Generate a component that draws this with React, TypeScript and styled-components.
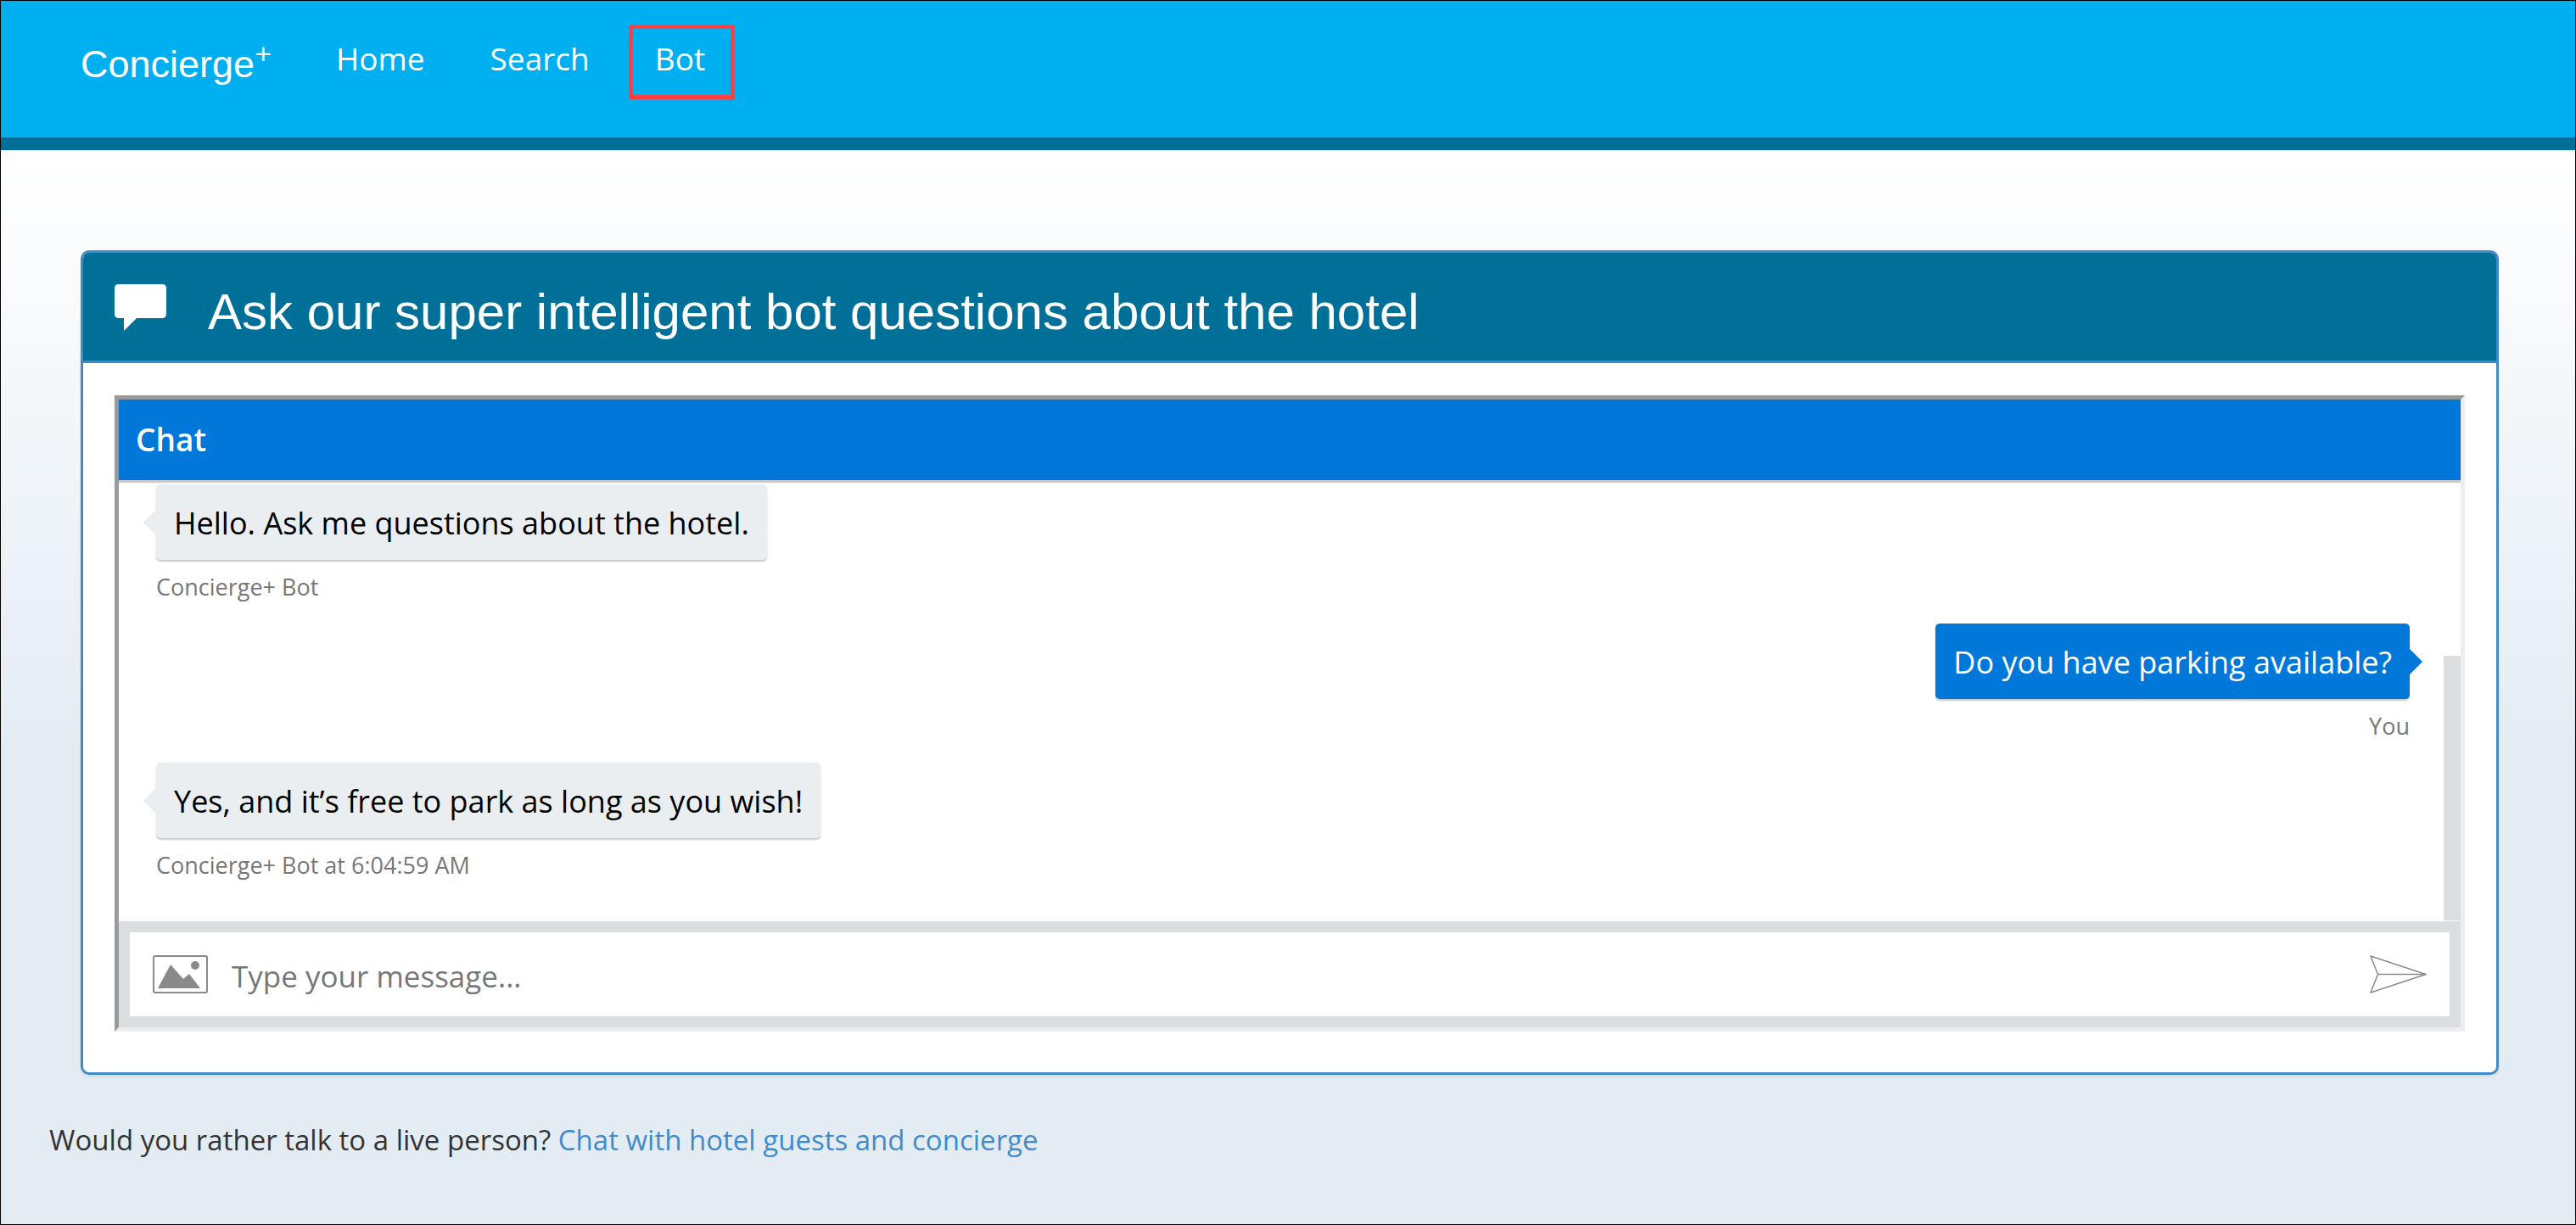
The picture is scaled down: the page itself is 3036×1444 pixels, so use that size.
import React from "react";
import styled, { createGlobalStyle } from "styled-components";

const ui = `"Segoe UI", "Open Sans", "Noto Sans", sans-serif`;
const arial = `Arial, "Liberation Sans", sans-serif`;

const GlobalStyle = createGlobalStyle`
  *, *::before, *::after { box-sizing: border-box; }
  body { margin: 0; }
`;

const Page = styled.div`
  min-height: 100vh;
  border: 1px solid #000;
  background: linear-gradient(to bottom, #ffffff 180px, #e4ecf3 880px);
  font-family: ${ui};
  color: #333;
`;

const Header = styled.header`
  display: flex;
  align-items: flex-start;
  height: 176px;
  padding: 28px 94px 0;
  background: #00aff0;
  border-bottom: 15px solid #007099;
`;

const Brand = styled.a`
  margin-right: 45px;
  padding-top: 22px;
  font: 45px/50px ${arial};
  color: #fff;
  text-decoration: none;

  sup {
    font-size: 34px;
    line-height: 0;
  }
`;

const Nav = styled.nav`
  display: flex;
  gap: 11px;
`;

const NavLink = styled.a<{ $marked?: boolean }>`
  height: 88px;
  padding: 11px 30px 14px 26px;
  border: 5px solid ${(p) => (p.$marked ? "#ff4040" : "transparent")};
  font-size: 37px;
  line-height: 48px;
  color: #fff;
  text-decoration: none;
`;

const Panel = styled.section`
  margin: 118px 90px 0 94px;
  border: 3px solid #428bca;
  border-radius: 10px;
  background: #fff;
  box-shadow: 0 2px 3px rgba(0, 0, 0, 0.08);
  overflow: hidden;
`;

const PanelHeading = styled.header`
  display: flex;
  align-items: center;
  gap: 49px;
  height: 130px;
  padding: 2px 37px 0;
  background: #007099;
  border-bottom: 3px solid #428bca;
  color: #fff;

  svg {
    width: 61px;
    height: 56px;
    flex: none;
  }

  h1 {
    margin: 0;
    padding-top: 10px;
    font: 60px/66px ${arial};
  }
`;

const PanelBody = styled.div`
  padding: 38px 37px 48px;
`;

const ChatFrame = styled.div`
  border: 5px solid;
  border-color: #9a9a9a #eee #eee #9a9a9a;
`;

const ChatTitle = styled.h2`
  position: relative;
  margin: 0;
  padding: 23px 20px 24px;
  background: #0078d9;
  box-shadow: 0 3px 1px rgba(0, 0, 0, 0.2);
  font-size: 37px;
  font-weight: 600;
  line-height: 48px;
  color: #fff;
`;

const Log = styled.div`
  display: flex;
  justify-content: space-between;
  height: 520px;
`;

const Messages = styled.div`
  display: flex;
  flex: 1;
  flex-direction: column;
  gap: 27px;
  padding: 5px 40px 0 44px;
`;

const ScrollThumb = styled.div`
  align-self: flex-end;
  width: 20px;
  height: 312px;
  margin-bottom: 1px;
  background: #dadee1;
`;

const Message = styled.div<{ $mine?: boolean }>`
  display: flex;
  flex-direction: column;
  align-items: ${(p) => (p.$mine ? "flex-end" : "flex-start")};
`;

const Bubble = styled.p<{ $mine?: boolean }>`
  position: relative;
  margin: 0;
  padding: 22px 21px 19px;
  border-radius: 5px;
  background: ${(p) => (p.$mine ? "#0078d9" : "#eaeef1")};
  box-shadow: 0 2px 2px rgba(0, 0, 0, 0.22);
  font-size: 36px;
  line-height: 48px;
  color: ${(p) => (p.$mine ? "#fff" : "#000")};

  &::after {
    content: "";
    position: absolute;
    top: 30px;
    ${(p) => (p.$mine ? "left: 100%;" : "right: 100%;")}
    border: 15px solid transparent;
    border-width: ${(p) => (p.$mine ? "15px 0 15px 15px" : "15px 15px 15px 0")};
    ${(p) => (p.$mine ? "border-left-color: #0078d9;" : "border-right-color: #eaeef1;")}
  }
`;

const Sender = styled.span`
  margin-top: 16px;
  font-size: 27px;
  line-height: 32px;
  color: #777;
`;

const Composer = styled.form`
  display: flex;
  align-items: center;
  padding: 0 27px;
  height: 125px;
  border: 13px solid #dadee1;
  background: #fff;
`;

const IconButton = styled.button`
  display: flex;
  flex: none;
  padding: 0;
  border: 0;
  background: none;
  color: #8a8a8a;
`;

const MessageInput = styled.input`
  flex: 1;
  min-width: 0;
  padding: 4px 28px 0;
  border: 0;
  outline: 0;
  background: none;
  font: 35px/48px ${ui};
  color: #000;

  &::placeholder {
    color: #777;
    opacity: 1;
  }
`;

const Footer = styled.p`
  margin: 0;
  padding: 53px 57px;
  font-size: 33px;
  line-height: 48px;

  a {
    color: #428bca;
    text-decoration: none;
  }
`;

const conversation = [
  { text: "Hello. Ask me questions about the hotel.", sender: "Concierge+ Bot" },
  { text: "Do you have parking available?", sender: "You", mine: true },
  { text: "Yes, and it’s free to park as long as you wish!", sender: "Concierge+ Bot at 6:04:59 AM" },
];

export default function App() {
  return (
    <Page>
      <GlobalStyle />
      <Header>
        <Brand href="#">
          Concierge<sup>+</sup>
        </Brand>
        <Nav>
          <NavLink href="#home">Home</NavLink>
          <NavLink href="#search">Search</NavLink>
          <NavLink href="#bot" $marked>Bot</NavLink>
        </Nav>
      </Header>
      <main>
        <Panel>
          <PanelHeading>
            <svg viewBox="0 0 61 56" aria-hidden="true">
              <path fill="currentColor" d="M5 0H56Q61 0 61 5V35Q61 40 56 40H26L11 55V40H5Q0 40 0 35V5Q0 0 5 0Z" />
            </svg>
            <h1>Ask our super intelligent bot questions about the hotel</h1>
          </PanelHeading>
          <PanelBody>
            <ChatFrame>
              <ChatTitle>Chat</ChatTitle>
              <Log>
                <Messages>
                  {conversation.map((m) => (
                    <Message key={m.text} $mine={m.mine}>
                      <Bubble $mine={m.mine}>{m.text}</Bubble>
                      <Sender>{m.sender}</Sender>
                    </Message>
                  ))}
                </Messages>
                <ScrollThumb />
              </Log>
              <Composer onSubmit={(e) => e.preventDefault()}>
                <IconButton type="button" aria-label="Upload image">
                  <svg width="65" height="45" viewBox="0 0 65 45" fill="none">
                    <rect x="1" y="1" width="63" height="43" rx="2" stroke="currentColor" strokeWidth="2" />
                    <path fill="currentColor" d="M6 39L21 11L36 28L43 22L56 39Z" />
                    <circle cx="50" cy="12" r="5" fill="currentColor" />
                  </svg>
                </IconButton>
                <MessageInput aria-label="Message" placeholder="Type your message..." />
                <IconButton type="submit" aria-label="Send">
                  <svg width="67" height="45" viewBox="0 0 67 45" fill="none" stroke="currentColor" strokeLinejoin="round">
                    <path d="M1 1L66 22.5L1 44L9.5 22.5Z" strokeWidth="1.5" />
                    <path d="M9 22.5H66" strokeWidth="1.5" />
                  </svg>
                </IconButton>
              </Composer>
            </ChatFrame>
          </PanelBody>
        </Panel>
        <Footer>
          Would you rather talk to a live person? <a href="#chat">Chat with hotel guests and concierge</a>
        </Footer>
      </main>
    </Page>
  );
}
